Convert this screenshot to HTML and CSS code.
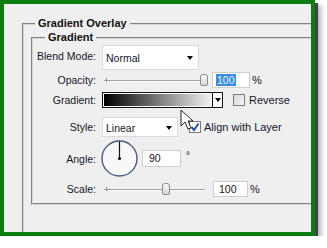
FILE: index.html
```html
<!DOCTYPE html>
<html lang="en">
<head>
    <meta charset="UTF-8">
    <meta name="viewport" content="width=device-width, initial-scale=1.0">
    <title>Layer Style - Gradient Overlay</title>
    <link rel="stylesheet" href="styles.css">
</head>
<body>

    <div class="dialog">
        <fieldset class="group outer">
            <legend>Gradient Overlay</legend>

            <fieldset class="group inner">
                <legend>Gradient</legend>

                <div class="row row-blend">
                    <span class="label">Blend Mode:</span>
                    <div class="select select-blend">Normal<span class="caret"></span></div>
                </div>

                <div class="row row-opacity">
                    <span class="label">Opacity:</span>
                    <div class="slider"><span class="thumb" style="margin-left: 98px"></span></div>
                    <div class="field"><span class="selected">100</span></div>
                    <span class="unit">%</span>
                </div>

                <div class="row row-gradient">
                    <span class="label">Gradient:</span>
                    <div class="picker">
                        <span class="ramp"></span>
                        <span class="drop"><span class="caret"></span></span>
                    </div>
                    <span class="check check-reverse"></span>
                    <span class="check-text">Reverse</span>
                </div>

                <div class="row row-style">
                    <span class="label">Style:</span>
                    <div class="select select-style">Linear<span class="caret"></span></div>
                    <span class="check check-align">
                        <svg width="10" height="10" viewBox="0 0 10 10"><polyline points="1.5,5 4,8 8.5,1.5" fill="none" stroke="#2c4fae" stroke-width="2"/></svg>
                    </span>
                    <span class="check-text">Align with Layer</span>
                </div>

                <div class="row row-angle">
                    <span class="label">Angle:</span>
                    <svg class="dial" width="37" height="37" viewBox="0 0 37 37">
                        <circle cx="18.5" cy="18.5" r="17.5" fill="#f8f8f8" stroke="#4b5a82" stroke-width="1.4"/>
                        <line x1="18.5" y1="18.5" x2="18.5" y2="1.5" stroke="#111" stroke-width="1.2"/>
                        <circle cx="18.5" cy="18.5" r="1.6" fill="#111"/>
                    </svg>
                    <div class="field field-angle">90</div>
                    <span class="degree">°</span>
                </div>

                <div class="row row-scale">
                    <span class="label">Scale:</span>
                    <div class="slider"><span class="thumb" style="margin-left: 60px"></span></div>
                    <div class="field field-scale">100</div>
                    <span class="unit">%</span>
                </div>
            </fieldset>
        </fieldset>

        <!-- mouse pointer over the gradient picker -->
        <svg class="cursor" width="14" height="22" viewBox="0 0 14 22">
            <path d="M1 1 L1 17 L5 13 L8 20 L11 19 L8 12 L13 12 Z" fill="#fff" stroke="#222" stroke-width="1"/>
        </svg>
    </div>

</body>
</html>
```

FILE: styles.css
```css
/* Photoshop layer style dialog, gradient overlay page */
body {
    margin: 0;
    background-color: #fff;
    font-family: "Liberation Sans", Arial, sans-serif;
    font-size: 10.5px;
    color: #16162a;
}

.dialog {
    position: relative;
    box-sizing: border-box;
    width: 315px;
    height: 236px;
    border: 4px solid #0e7d10;
    background-color: #efefef;
    overflow: hidden;
    box-shadow: 3px 3px 0 #463d56, 5px 6px 5px 1px rgba(0, 0, 0, 0.3);
}

.group {
    min-width: 0;
    padding: 0;
    border: 2px groove #d6d6d6;
}

.group legend {
    padding: 0 3px;
    font-weight: bold;
    font-size: 11px;
    line-height: 13px;
    color: #111;
}

.outer {
    margin: 13px -40px 0 18px;
    padding-bottom: 60px;
}

.outer > legend {
    margin-left: 11px;
}

.inner {
    margin: 1px 0 0 7px;
    padding-bottom: 6px;
}

.inner > legend {
    margin-left: 12px;
}

.row {
    display: flex;
    align-items: center;
}

.label {
    width: 63px;
    margin-right: 6px;
    text-align: right;
    flex-shrink: 0;
}

.row-blend { margin-top: 1px; height: 25px; }
.row-opacity { margin-top: 2px; height: 16px; }
.row-gradient { margin-top: 4px; height: 16px; }
.row-style { margin-top: 9px; height: 20px; }
.row-angle { margin-top: 3px; height: 37px; }
.row-scale { margin-top: 4px; height: 16px; }

.row-blend .label {
    margin-top: -4px;
}

/* Dropdowns */
.select {
    box-sizing: border-box;
    display: flex;
    align-items: center;
    justify-content: space-between;
    height: 100%;
    padding: 1px 5px 0 3px;
    background-color: #fff;
    border: 1px solid #dadada;
}

.select-blend { width: 97px; }
.select-style { width: 76px; }

.caret {
    width: 0;
    height: 0;
    border-left: 3.5px solid transparent;
    border-right: 3.5px solid transparent;
    border-top: 4px solid #000;
}

/* Sliders */
.slider {
    display: flex;
    align-items: center;
    width: 106px;
    height: 14px;
    margin-right: 4px;
    background:
        linear-gradient(#8d8d8d, #8d8d8d) 4px 5px / 1px 4px no-repeat,
        linear-gradient(#a4a4a4, #a4a4a4) 2px 7px / 101px 1px no-repeat,
        linear-gradient(#fff, #fff) 2px 8px / 101px 1px no-repeat;
}

.thumb {
    box-sizing: border-box;
    width: 8px;
    height: 12px;
    border: 1px solid #8c8c8c;
    border-radius: 3px 3px 2px 2px;
    background: linear-gradient(#fbfbfb, #d6d6d6);
}

/* Number fields */
.field {
    box-sizing: border-box;
    width: 38px;
    height: 16px;
    padding: 1px 0 0 3px;
    background-color: #fff;
    border: 1px solid #cfcfcf;
    line-height: 13px;
}

.selected {
    padding: 0 1px;
    background-color: #3b8de4;
    color: #eaf2ff;
}

.field-scale {
    margin-left: 1px;
    width: 35px;
    padding-left: 5px;
}

.field-angle {
    width: 39px;
    height: 17px;
    margin-left: 4px;
    padding-left: 6px;
}

.unit {
    margin-left: 2px;
    font-size: 11px;
}

.degree {
    margin: -6px 0 0 5px;
    font-size: 10px;
}

.dial {
    margin-left: -1px;
}

/* Gradient picker */
.picker {
    box-sizing: border-box;
    display: flex;
    width: 121px;
    height: 16px;
    border: 1px solid #111;
    background-color: #fff;
}

.ramp {
    flex: 1;
    border: 1px solid #fff;
    background: linear-gradient(to right, #000, #f2f2f2);
}

.drop {
    display: flex;
    align-items: center;
    justify-content: center;
    width: 9px;
    border-left: 1px solid #111;
}

/* Checkboxes */
.check {
    box-sizing: border-box;
    display: flex;
    align-items: center;
    justify-content: center;
    width: 12px;
    height: 12px;
    border: 1px solid #7c7c7c;
    background: linear-gradient(135deg, #d8d8d8, #f6f6f6);
}

.check-reverse { margin-left: 10px; }
.check-align { margin-left: 11px; background: #fff; }

.check-text {
    margin-left: 4px;
    font-size: 11px;
}

.row-style .check-text {
    margin-left: 3px;
}

.cursor {
    position: absolute;
    left: 176px;
    top: 105px;
}
```
